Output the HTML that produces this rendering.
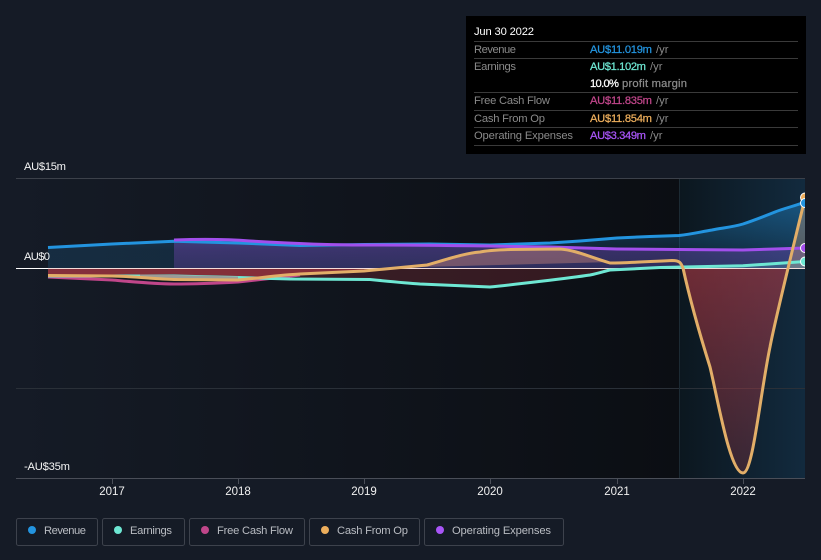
<!DOCTYPE html>
<html><head><meta charset="utf-8"><style>
html,body{margin:0;padding:0;background:#151b26;width:821px;height:560px;overflow:hidden}
svg{display:block}
text{font-family:"Liberation Sans",sans-serif}
.m{stroke-width:.25px}
</style></head><body>
<svg width="821" height="560" viewBox="0 0 821 560" xmlns="http://www.w3.org/2000/svg">
<defs>
<linearGradient id="bg" x1="0" x2="1" y1="0" y2="0"><stop offset="0" stop-color="#151b26"/><stop offset="1" stop-color="#0b0e13"/></linearGradient>
<linearGradient id="fc" x1="0" x2="1" y1="0" y2="0"><stop offset="0" stop-color="#0c171f"/><stop offset="1" stop-color="#122a3e"/></linearGradient>
<linearGradient id="red" gradientUnits="userSpaceOnUse" x1="0" x2="0" y1="268" y2="473"><stop offset="0" stop-color="#d8404c" stop-opacity=".48"/><stop offset="1" stop-color="#d8404c" stop-opacity=".2"/></linearGradient>
<linearGradient id="blue" gradientUnits="userSpaceOnUse" x1="0" x2="0" y1="200" y2="250"><stop offset="0" stop-color="#2394df" stop-opacity=".42"/><stop offset="1" stop-color="#2394df" stop-opacity=".15"/></linearGradient>
<linearGradient id="pur" gradientUnits="userSpaceOnUse" x1="0" x2="0" y1="240" y2="268"><stop offset="0" stop-color="#a855f7" stop-opacity=".3"/><stop offset="1" stop-color="#a855f7" stop-opacity=".2"/></linearGradient>
</defs>
<rect width="821" height="560" fill="#151b26"/>
<rect x="16" y="178" width="663" height="300" fill="url(#bg)"/>
<rect x="679" y="178" width="126" height="300" fill="url(#fc)"/>
<path d="M679.500 178V478" stroke="#1c2a33" stroke-width="1"/>
<path d="M16 178.500H805" stroke="#3c414a"/>
<path d="M16 388.500H679M680 388.500H805" stroke="#2a3038"/>
<path d="M16 478.500H805" stroke="#4a4e58"/>
<path d="M112.500 478V484M238.500 478V484M364.500 478V484M490.500 478V484M617.500 478V484M743.500 478V484" stroke="#4a4e58"/>

<path d="M48 247.500L112 244 174 241.300 238 243 300 245.500 364 244.500 430 244 490 245 550 243 580 241 617 238 650 236.500 679 235.500 C692 234 700 232 712 230 722 228 733 227 743 224 755 220 765 216 775 212 785 208 795 206 805 202V268H48Z" fill="url(#blue)"/>
<path d="M174 240C200 239 225 239 250 241 300 244 340 245 364 245 430 245 490 246 550 247L617 249 679 249.500 743 250 775 249 805 248V268H174Z" fill="url(#pur)"/>
<path d="M48 268V275.500L112 276 174 279.500 238 280 300 274 364 271 382 268Z" fill="#d8404c" fill-opacity=".58"/>
<path d="M300 274L364 271 382 268H682L660 267.500 610 270 590 275 500 286 490 287 420 284 370 279.500 300 279Z" fill="#d8404c" fill-opacity=".2"/>
<path d="M382 268L427 265C445 260 465 253 480 252 490 250 500 250 510 249.500L560 249C575 250 590 257 610 263 625 263 640 262 672 260.500 680 262 682 268Z" fill="#e89880" fill-opacity=".36"/>
<path d="M683 268C690 300 700 335 710 367 718 400 730 473 743 473 753 473 760 395 770 347 773 330 779 310 783 292L788 268Z" fill="url(#red)"/>
<path d="M788 268L804 198 805 198V268Z" fill="#e8b080" fill-opacity=".3"/>
<path d="M680 268L743 266 805 261.500V268Z" fill="#6ee7d3" fill-opacity=".18"/>
<path d="M16 268.500H48" stroke="#fff"/>
<path d="M48 268.500H805" stroke="#f3dcd9"/>

<g fill="none" stroke-width="3" stroke-linejoin="round" stroke-linecap="butt">
<path d="M48 247.500L112 244 174 241.300 238 243 300 245.500 364 244.500 430 244 490 245 550 243 580 241 617 238 650 236.500 679 235.500 C692 234 700 232 712 230 722 228 733 227 743 224 755 220 765 216 775 212 785 208 795 206 805 202" stroke="#2394df"/>
<path d="M174 240C200 239 225 239 250 241 300 244 340 245 364 245 430 245 490 246 550 247L617 249 679 249.500 743 250 775 249 805 248" stroke="#a24fec"/>
<path d="M48 277L112 280C135 282 155 284 174 284 195 284 220 283 238 282L300 275" stroke="#c0468a"/>
<path d="M48 276L174 276 238 277.500 290 279 370 279.500C385 281 405 283 420 284L490 287C510 285 570 278 590 275 600 273 605 271 610 270L660 267.500 743 265.800 805 261.500" stroke="#6ee7d3"/>
<path d="M140 276L174 276.500 238 278" stroke="#9a9c98"/>
<path d="M48 275.500L112 276C135 276.500 155 279 174 279.500L238 280C260 278 280 275 300 274L364 271 427 265C445 260 465 253 480 252 490 250 500 250 510 249.500L560 249C575 250 590 257 610 263 625 263 640 262 672 260.500 680 260.500 681 263 683 268 690 300 700 335 710 367 718 400 730 473 743 473 753 473 760 395 770 347 775 320 795 240 805 198" stroke="#e2ae68"/>
</g>
<circle cx="805" cy="197.500" r="4.500" fill="#edae5c" stroke="#fff" stroke-width="1"/>
<circle cx="805" cy="203" r="4.500" fill="#2394df" stroke="#fff" stroke-width="1"/>
<circle cx="805" cy="248" r="4.500" fill="#a24fec" stroke="#fff" stroke-width="1"/>
<circle cx="805" cy="261.500" r="4.500" fill="#6ee7d3" stroke="#fff" stroke-width="1"/>
<rect x="805" y="170" width="16" height="320" fill="#151b26"/>

<g font-size="11.200" fill="#f4f4f4">
<text x="24" y="170" textLength="42">AU$15m</text>
<text x="24" y="260" textLength="26">AU$0</text>
<text x="24" y="470" textLength="46">-AU$35m</text>
</g>
<g font-size="11.500" fill="#f0f0f0" text-anchor="middle">
<text x="112" y="495">2017</text><text x="238" y="495">2018</text><text x="364" y="495">2019</text><text x="490" y="495">2020</text><text x="617" y="495">2021</text><text x="743" y="495">2022</text>
</g>

<rect x="466" y="16" width="340" height="138" fill="#000"/>
<path d="M474 41.500H798M474 58.500H798M474 92.500H798M474 110.500H798M474 127.500H798M474 145.500H798" stroke="#3a3a3a"/>
<text x="474" y="35" font-size="11.200" fill="#fff" textLength="60">Jun 30 2022</text>
<g font-size="11.200" fill="#8a8a8a">
<text x="474" y="53" textLength="42">Revenue</text>
<text x="474" y="70" textLength="42">Earnings</text>
<text x="474" y="104" textLength="76">Free Cash Flow</text>
<text x="474" y="122" textLength="71">Cash From Op</text>
<text x="474" y="139" textLength="99">Operating Expenses</text>
</g>
<g font-size="11.200">
<text class="m" x="590" y="53" fill="#2394df" stroke="#2394df" textLength="62">AU$11.019m</text>
<text class="m" x="590" y="70" fill="#6ee7d3" stroke="#6ee7d3" textLength="56">AU$1.102m</text>
<text class="m" x="590" y="87" fill="#fff" stroke="#fff" textLength="29">10.0%</text>
<text class="m" x="590" y="104" fill="#c0468a" stroke="#c0468a" textLength="62">AU$11.835m</text>
<text class="m" x="590" y="122" fill="#edae5c" stroke="#edae5c" textLength="62">AU$11.854m</text>
<text class="m" x="590" y="139" fill="#a855f7" stroke="#a855f7" textLength="56">AU$3.349m</text>
</g>
<g font-size="11.200" fill="#8a8a8a">
<text x="656" y="53">/yr</text>
<text x="650" y="70">/yr</text>
<text class="m" x="622" y="87" textLength="65" stroke="#8a8a8a">profit margin</text>
<text x="656" y="104">/yr</text>
<text x="656" y="122">/yr</text>
<text x="650" y="139">/yr</text>
</g>

<g fill="none" stroke="#3d424c">
<rect x="16.500" y="518.500" width="81" height="27" rx="2"/>
<rect x="102.500" y="518.500" width="82" height="27" rx="2"/>
<rect x="189.500" y="518.500" width="115" height="27" rx="2"/>
<rect x="309.500" y="518.500" width="110" height="27" rx="2"/>
<rect x="424.500" y="518.500" width="139" height="27" rx="2"/>
</g>
<circle cx="32" cy="530" r="4" fill="#2394df"/>
<circle cx="118" cy="530" r="4" fill="#6ee7d3"/>
<circle cx="205" cy="530" r="4" fill="#c0468a"/>
<circle cx="325" cy="530" r="4" fill="#edae5c"/>
<circle cx="440" cy="530" r="4" fill="#a855f7"/>
<g font-size="11.200" fill="#b9bcc2">
<text x="44" y="534" textLength="42">Revenue</text>
<text x="130" y="534" textLength="42">Earnings</text>
<text x="217" y="534" textLength="76">Free Cash Flow</text>
<text x="337" y="534" textLength="71">Cash From Op</text>
<text x="452" y="534" textLength="99">Operating Expenses</text>
</g>
</svg>
</body></html>
